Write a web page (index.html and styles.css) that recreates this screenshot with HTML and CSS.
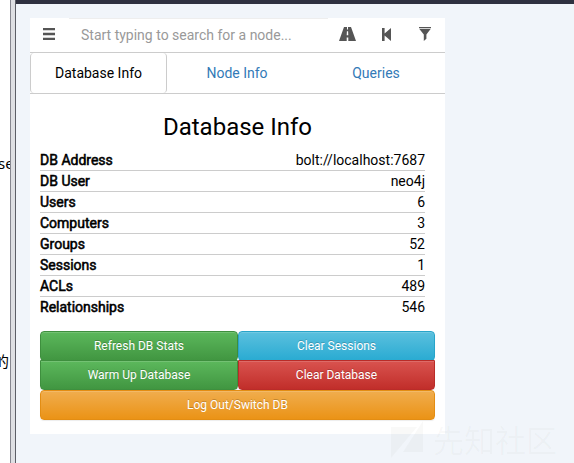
FILE: index.html
```
<!DOCTYPE html>
<html lang="en">
<head>
<meta charset="utf-8">
<title>Database Info</title>
<link rel="stylesheet" href="styles.css">
</head>
<body>
<div class="window">
  <aside class="page-edge">
    <span class="fragment latin">se</span>
    <span class="fragment cjk">的</span>
  </aside>
  <div class="splitter"></div>
  <main class="app">
    <section class="panel">
      <div class="search">
        <button class="icon menu" aria-label="Menu"><svg width="12" height="12" viewBox="0 0 12 12"><path d="M0 0h12v2.3H0zM0 4.8h12v2.4H0zM0 9.7h12V12H0z"/></svg></button>
        <input class="query" type="text" placeholder="Start typing to search for a node...">
        <button class="icon road" aria-label="Pathfinding"><svg width="17" height="14" viewBox="0 0 17 14"><path d="M5 0h3v2.5h1V0h3l5 14H9.3v-3.6H7.7V14H0zM7.9 4.2l-.2 4h1.6l-.2-4z" fill-rule="evenodd"/></svg></button>
        <button class="icon back" aria-label="Back"><svg width="9" height="13" viewBox="0 0 9 13"><path d="M0 0h2.6v5.4L9 0v13L2.6 7.6V13H0z"/></svg></button>
        <button class="icon filter" aria-label="Filter"><svg width="12" height="14" viewBox="0 0 12 14"><path d="M0 0h12v1.2H0zM.4 2h11.2L7.4 7.5v4.3L4.8 14V7.5z"/></svg></button>
      </div>
      <nav class="tabs">
        <a class="tab active">Database Info</a>
        <a class="tab">Node Info</a>
        <a class="tab">Queries</a>
      </nav>
      <div class="content">
        <h3>Database Info</h3>
        <dl class="stats">
          <div><dt>DB Address</dt><dd>bolt://localhost:7687</dd></div>
          <div><dt>DB User</dt><dd>neo4j</dd></div>
          <div><dt>Users</dt><dd>6</dd></div>
          <div><dt>Computers</dt><dd>3</dd></div>
          <div><dt>Groups</dt><dd>52</dd></div>
          <div><dt>Sessions</dt><dd>1</dd></div>
          <div><dt>ACLs</dt><dd>489</dd></div>
          <div><dt>Relationships</dt><dd>546</dd></div>
        </dl>
        <div class="actions">
          <button class="btn success">Refresh DB Stats</button>
          <button class="btn info">Clear Sessions</button>
          <button class="btn success lower">Warm Up Database</button>
          <button class="btn danger lower">Clear Database</button>
          <button class="btn warning">Log Out/Switch DB</button>
        </div>
      </div>
    </section>
    <div class="watermark">
      <svg width="32" height="37" viewBox="0 0 32 37"><path d="M0 6h26L0 37zM32 0v31H12z"/></svg>
      <span>先知社区</span>
    </div>
  </main>
</div>
</body>
</html>
```
FILE: styles.css
```
* { box-sizing: border-box; }
body {
  margin: 0;
  font: 14px/20px Roboto, "Noto Sans CJK SC", sans-serif;
  color: #000;
  background: #fff;
}
button, input { font-family: inherit; margin: 0; }
.window { display: flex; width: 574px; height: 463px; overflow: hidden; }
.page-edge { position: relative; width: 10px; overflow: hidden; background: #fff; }
.fragment { position: absolute; white-space: nowrap; }
.latin { left: -2px; top: 153px; font: 15px/20px "Noto Sans", sans-serif; }
.cjk { left: -6px; top: 351px; font: 15px/20px "Noto Sans CJK SC", sans-serif; }
.splitter {
  width: 6px;
  background: #dedfe3;
  border-left: 1px solid #85868f;
  border-right: 1px solid #5c5e66;
}
.app {
  position: relative;
  flex: 1;
  padding: 14px 0 0 14px;
  border-top: 4px solid #2f3140;
  background: #f1f5fa;
}
.panel { width: 415px; height: 416px; background: #fff; }
.search { display: flex; height: 35px; border-bottom: 1px solid #ccc; }
.icon {
  display: flex;
  align-items: center;
  justify-content: center;
  width: 39px;
  padding: 0 1px 2px 0;
  border: 0;
  background: transparent;
}
.icon svg { display: block; fill: #555; }
.back { padding-bottom: 1px; }
.query {
  flex: 1;
  min-width: 0;
  padding: 0 12px 2px;
  border: 0;
  border-top: 1px solid #eee;
  background: transparent;
  font-size: 14px;
}
.query::placeholder { color: #999; opacity: 1; }
.tabs { display: flex; height: 41px; border-bottom: 1px solid #ccc; }
.tab { padding-top: 10px; width: 139px; text-align: center; color: #337ab7; }
.tab.active {
  width: 137px;
  color: #000;
  border: 1px solid #ccc;
  border-width: 0 1px;
  border-radius: 4px;
}
.tab:nth-child(2) { width: 140px; }
.tab:nth-child(3) { width: 138px; }
.content { padding: 20px 10px 0; }
h3 { margin: 0 0 10px; font-size: 24px; font-weight: 400; line-height: 26px; text-align: center; }
.stats { margin: 0 10px 13px 0; }
.stats div { display: flex; justify-content: space-between; height: 21px; border-bottom: 1px solid #ccc; }
.stats div:last-child { border-bottom: 0; }
dt { -webkit-text-stroke: .55px #000; }
dd { margin: 0; }
.actions {
  display: grid;
  grid-template-columns: 198px 1fr;
  grid-template-rows: 29px 30px 30px;
  width: 395px;
}
.btn {
  height: 30px;
  padding: 0;
  border: 1px solid;
  border-radius: 4px;
  color: #fff;
  font-size: 12px;
  line-height: 18px;
  text-shadow: 0 -1px 0 rgba(0, 0, 0, .2);
  box-shadow: inset 0 1px 0 rgba(255, 255, 255, .15), 0 1px 1px rgba(0, 0, 0, .075);
}
.lower { border-top-left-radius: 0; border-top-right-radius: 0; }
.success { background: linear-gradient(#5cb85c, #419641); border-color: #3e8f3e; }
.info { background: linear-gradient(#5bc0de, #2aabd2); border-color: #28a4c9; }
.danger { background: linear-gradient(#d9534f, #c12e2a); border-color: #b92c28; }
.warning { grid-column: 1 / -1; background: linear-gradient(#f0ad4e, #eb9316); border-color: #e38d13; }
.watermark {
  position: absolute;
  left: 375px;
  top: 417px;
  display: flex;
  color: rgba(90, 90, 70, .035);
}
.watermark svg { fill: currentColor; }
.watermark span { margin-left: 10px; font: 31px/35px "Noto Sans CJK SC", sans-serif; }
```
